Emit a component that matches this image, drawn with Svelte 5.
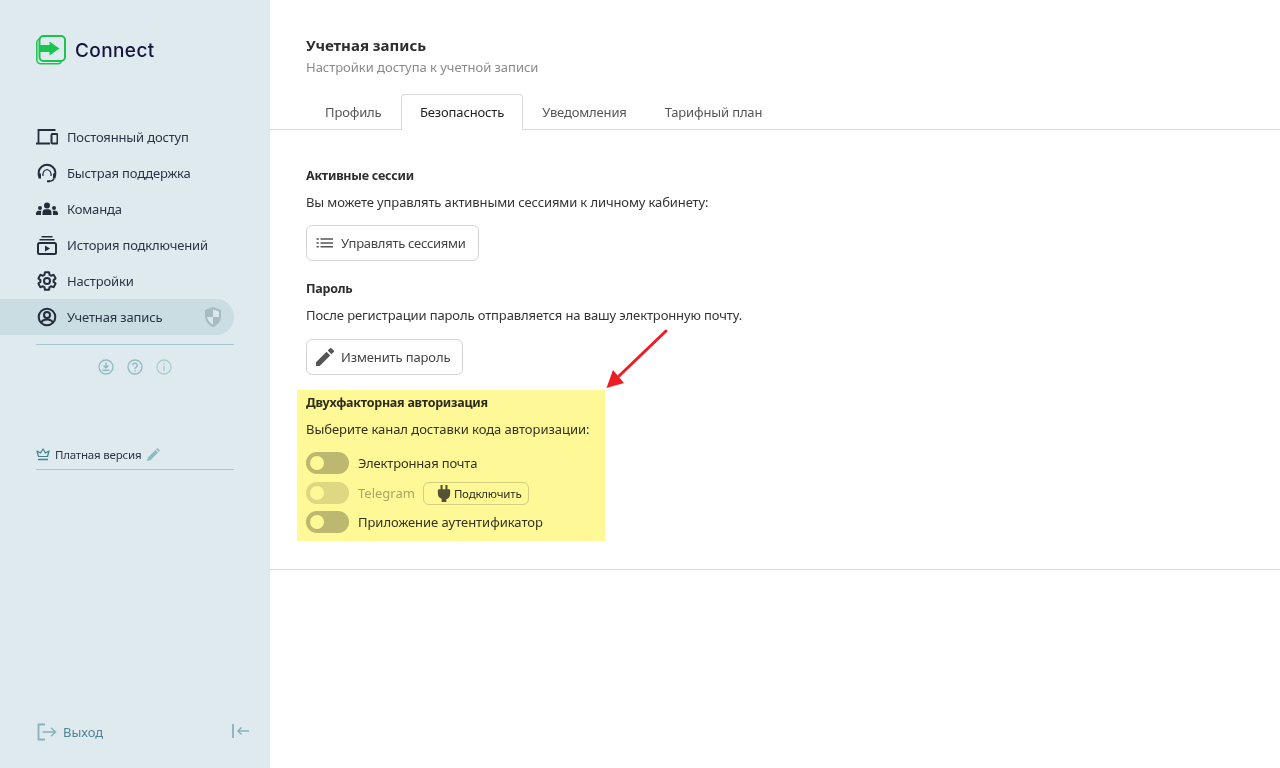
<script>
  const nav = [
    { label: 'Постоянный доступ', icon: 'devices' },
    { label: 'Быстрая поддержка', icon: 'support' },
    { label: 'Команда', icon: 'team' },
    { label: 'История подключений', icon: 'history' },
    { label: 'Настройки', icon: 'gear' },
    { label: 'Учетная запись', icon: 'user', active: true }
  ];
  const tabs = ['Профиль', 'Безопасность', 'Уведомления', 'Тарифный план'];
</script>

<div class="page">
  <aside class="side">
    <div class="logo">
      <svg width="30" height="30" viewBox="0 0 30 30" fill="none">
        <rect x="0.800" y="3.800" width="25" height="25" rx="4" stroke="#1cc44f" stroke-width="1.500"/>
        <rect x="3.500" y="1" width="25.500" height="25" rx="4" fill="#dfeaef" stroke="#1cc44f" stroke-width="2"/>
        <path d="M4 10h9.500V6.500L23.500 13.500l-10 7V17H4z" fill="#1cc44f"/>
      </svg>
      <span>Connect</span>
    </div>

    <nav class="nav">
      {#each nav as item}
        <div class="item" class:active={item.active}>
          <svg class="ico" width="22" height="22" viewBox="0 0 22 22" fill="none" stroke="#252c3b" stroke-width="2">
            {#if item.icon === 'devices'}
              <path d="M2.500 17V4h17" stroke-width="1.800"/>
              <path d="M0 17.500h14" stroke-width="2"/>
              <rect x="15.500" y="8" width="6" height="9.500" rx="1"/>
            {:else if item.icon === 'support'}
              <path d="M3.800 15.500a8.400 8.400 0 1 1 14.400 0" />
              <path d="M7 14c-.5-3.500.5-5.500 4-6.500 3.500 1 4.500 3 4 6.500" stroke-width="1.200"/>
              <path d="M2.500 11.500v5h2.500v-5zM17 11.500v5h2.500v-5z" fill="#252c3b" stroke="none"/>
              <path d="M18 16.500c-.8 2.200-3 2.800-5.500 2.800" stroke-width="1.600"/>
              <path d="M11 19.300h3" stroke-width="2"/>
            {:else if item.icon === 'team'}
              <g fill="#252c3b" stroke="none">
                <circle cx="11" cy="7.500" r="3"/>
                <path d="M6.500 17v-2.500c0-2 1.500-3.200 3-3.200h3c1.500 0 3 1.200 3 3.200V17z"/>
                <circle cx="4" cy="10" r="2"/>
                <path d="M0 17v-1.500c0-1.500 1-2.700 2.500-2.700h2.800c-.3.600-.3 1.500-.3 2V17z"/>
                <circle cx="18" cy="10" r="2"/>
                <path d="M22 17v-1.500c0-1.500-1-2.700-2.500-2.700h-2.800c.3.600.3 1.500.3 2V17z"/>
              </g>
            {:else if item.icon === 'history'}
              <path d="M5.500 2.800h11M3.500 5.800h15" stroke-width="1.500"/>
              <rect x="2" y="9" width="18" height="11" rx="1.500" stroke-width="2"/>
              <path d="M9 11.500l5 3-5 3z" fill="#252c3b" stroke="none"/>
            {:else if item.icon === 'gear'}
              <path transform="scale(.9167)" stroke-width="2.200" stroke-linejoin="round" d="M19.140 12.940c.04-.3.06-.61.06-.94 0-.32-.02-.64-.07-.94l2.030-1.580c.18-.14.23-.41.12-.61l-1.920-3.320c-.12-.22-.37-.29-.59-.22l-2.390.96c-.5-.38-1.030-.7-1.620-.94l-.36-2.540c-.04-.24-.24-.41-.48-.41h-3.840c-.24 0-.43.17-.47.41l-.36 2.540c-.59.24-1.130.57-1.620.94l-2.390-.96c-.22-.08-.47 0-.59.22L2.740 8.870c-.12.21-.08.47.12.61l2.030 1.580c-.05.3-.09.63-.09.94s.02.64.07.94l-2.030 1.580c-.18.14-.23.41-.12.61l1.920 3.320c.12.22.37.29.59.22l2.390-.96c.5.38 1.030.7 1.620.94l.36 2.540c.05.24.24.41.48.41h3.840c.24 0 .44-.17.47-.41l.36-2.540c.59-.24 1.130-.56 1.620-.94l2.390.96c.22.08.47 0 .59-.22l1.920-3.320c.12-.22.07-.47-.12-.61l-2.010-1.580z"/>
              <circle cx="11" cy="11" r="3"/>
            {:else}
              <circle cx="11" cy="11" r="8.300"/>
              <circle cx="11" cy="9" r="3"/>
              <path d="M5 17c1-2.400 3.200-3.500 6-3.500s5 1.100 6 3.500"/>
            {/if}
          </svg>
          <span>{item.label}</span>
          {#if item.active}
            <svg class="shield" width="18" height="20" viewBox="0 0 18 20">
              <path d="M9 0l8 3v6c0 5-3.500 9-8 11-4.500-2-8-6-8-11V3z" fill="#a5bcc2"/>
              <path d="M9 2.200l6 2.200V10H9zM9 10v7.700C6 16 3.700 13.500 3 10z" fill="#dbe6ea"/>
            </svg>
          {/if}
        </div>
      {/each}
    </nav>

    <div class="line"></div>

    <div class="mini">
      <svg width="16" height="16" viewBox="0 0 16 16" fill="none" stroke="#8fbac4" stroke-width="1.300">
        <circle cx="8" cy="8" r="7"/>
        <path d="M8 3.500v5M5.500 6.500L8 9l2.500-2.500" stroke-width="1.500"/>
        <path d="M4.500 11.300h7" stroke-width="1.600"/>
      </svg>
      <svg width="16" height="16" viewBox="0 0 16 16" fill="none" stroke="#8fbac4" stroke-width="1.300">
        <circle cx="8" cy="8" r="7"/>
        <path d="M5.800 6.300a2.200 2.200 0 1 1 3.400 1.900c-.8.500-1.200 1-1.200 1.900" stroke-width="1.500"/>
        <path d="M8 11.300v1.300" stroke-width="1.500"/>
      </svg>
      <svg width="16" height="16" viewBox="0 0 16 16" fill="none" stroke="#aacdd4" stroke-width="1.300">
        <circle cx="8" cy="8" r="7"/>
        <path d="M8 7v5M8 4v1.500" stroke-width="1.500"/>
      </svg>
    </div>

    <div class="plan">
      <svg width="14" height="13" viewBox="0 0 14 13" fill="none" stroke="#47808f" stroke-width="1.200">
        <path d="M2.500 8.500L1 3l3.500 2L7 1l2.500 4L13 3l-1.500 5.500z" stroke-linejoin="round"/>
        <path d="M2 11.500h10" stroke-width="1.500"/>
      </svg>
      <span>Платная версия</span>
      <svg class="pen" width="13" height="13" viewBox="0 0 12 12">
        <path d="M0 12l.8-3.200 7-7 2.400 2.400-7 7zM8.500 1.300L9.800 0 12 2.200l-1.300 1.300z" fill="#8fbac4"/>
      </svg>
    </div>

    <div class="foot">
      <div class="exit">
        <svg width="20" height="18" viewBox="0 0 20 18" fill="none" stroke="#87b2bd" stroke-width="1.500">
          <path d="M8 1.500H1.500v15H8" stroke-width="1.800"/>
          <path d="M5.500 9h13M14 4.800L18.500 9 14 13.200"/>
        </svg>
        <span>Выход</span>
      </div>
      <svg width="17" height="14" viewBox="0 0 17 14" fill="none" stroke="#87b2bd" stroke-width="1.500">
        <path d="M1 0v14" stroke-width="1.800"/>
        <path d="M5.500 7H17M9.500 3.500L6 7l3.500 3.500"/>
      </svg>
    </div>
  </aside>

  <main class="main">
    <header class="head">
      <h1>Учетная запись</h1>
      <p>Настройки доступа к учетной записи</p>
    </header>

    <div class="tabs">
      {#each tabs as t, i}
        <div class="tab" class:on={i === 1}>{t}</div>
      {/each}
    </div>

    <section class="body">
      <h2>Активные сессии</h2>
      <p class="txt">Вы можете управлять активными сессиями к личному кабинету:</p>
      <div class="btn b1">
        <svg width="18" height="18" viewBox="0 0 18 18" fill="#555">
          <path d="M.5 4.300h2.300v1.500H.5zM.5 8.200h2.300v1.500H.5zM.5 12.100h2.300v1.500H.5zM4.500 4.300H17v1.500H4.500zM4.500 8.200H17v1.500H4.500zM4.500 12.100H17v1.500H4.500z"/>
        </svg>
        Управлять сессиями
      </div>

      <h2 class="second">Пароль</h2>
      <p class="txt">После регистрации пароль отправляется на вашу электронную почту.</p>
      <div class="btn b2">
        <svg width="18" height="18" viewBox="0 0 18 18" fill="#555">
          <path d="M0 18v-3.700L10.500 3.800l3.700 3.700L3.700 18zM11.700 2.600L14 .3a1 1 0 0 1 1.400 0l2.300 2.300a1 1 0 0 1 0 1.400l-2.300 2.300z"/>
        </svg>
        Изменить пароль
      </div>

      <div class="twofa">
        <h2>Двухфакторная авторизация</h2>
        <p class="txt">Выберите канал доставки кода авторизации:</p>
        <div class="row r1"><span class="tog"></span>Электронная почта</div>
        <div class="row r2 dim">
          <span class="tog"></span><span class="tg">Telegram</span>
          <span class="conn">
            <svg width="14" height="17" viewBox="0 0 14 18" fill="#555">
              <path d="M3.300 0h2.200v4.500h3V0h2.200v4.500H12c1 0 1.500.5 1.500 1.500v3.500c0 3-1.600 5-4 5.600V18h-5v-3.400c-2.400-.6-4-2.600-4-5.600V6c0-1 .5-1.500 1.500-1.500h1.300z"/>
            </svg>
            Подключить
          </span>
        </div>
        <div class="row r3"><span class="tog"></span>Приложение аутентификатор</div>
      </div>
    </section>
  </main>

  <div class="hl"></div>
  <svg class="arrow" width="70" height="66" viewBox="0 0 70 66">
    <path d="M65 5L18 50" stroke="#ee1c25" stroke-width="3" stroke-linecap="round"/>
    <path d="M5.500 62L12 44l11 13z" fill="#ee1c25"/>
  </svg>
</div>

<style>
  :global(body) {
    margin: 0;
    background: #fff;
  }
  .page {
    position: relative;
    display: flex;
    height: 768px;
    overflow: hidden;
    font-family: "Noto Sans", sans-serif;
    font-size: 13px;
    color: #333;
  }
  .side {
    width: 270px;
    flex: none;
    background: #dfeaef;
    display: flex;
    flex-direction: column;
    box-sizing: border-box;
    padding-top: 35px;
  }
  .logo {
    display: flex;
    align-items: center;
    gap: 9px;
    padding-left: 36px;
    height: 30px;
  }
  .logo span {
    font-family: Inter, sans-serif;
    font-size: 19px;
    font-weight: 500;
    letter-spacing: .4px;
    color: #14143c;
  }
  .nav {
    margin-top: 54px;
  }
  .item {
    display: flex;
    align-items: center;
    height: 36px;
    width: 234px;
    box-sizing: border-box;
    padding-left: 36px;
    color: #2a3444;
    letter-spacing: -.16px;
    border-radius: 0 18px 18px 0;
  }
  .item span {
    margin-left: 9px;
  }
  .ico {
    flex: none;
  }
  .item.active {
    background: #c9dde2;
  }
  .shield {
    margin-left: auto;
    margin-right: 12px;
  }
  .line {
    width: 198px;
    margin: 9px 0 0 36px;
    border-top: 1px solid #a6c8d0;
  }
  .mini {
    width: 198px;
    margin: 14px 0 0 36px;
    display: flex;
    justify-content: center;
    gap: 13px;
  }
  .plan {
    width: 198px;
    margin: 65px 0 0 36px;
    height: 30px;
    box-sizing: border-box;
    border-bottom: 1px solid #a6c8d0;
    display: flex;
    align-items: center;
    gap: 5px;
    font-size: 11.500px;
    letter-spacing: -.2px;
    color: #2a3444;
  }
  .pen {
    margin-left: 1px;
  }
  .foot {
    margin-top: auto;
    height: 48px;
    box-sizing: border-box;
    padding: 0 21px 0 37px;
    display: flex;
    align-items: flex-start;
    justify-content: space-between;
  }
  .foot > svg {
    margin-top: 4px;
  }
  .exit {
    display: flex;
    align-items: center;
    gap: 6px;
    color: #4f8596;
    height: 24px;
  }
  .main {
    flex: 1;
    min-width: 0;
  }
  .head {
    padding: 35px 36px 0;
  }
  h1 {
    margin: 0;
    font-size: 15px;
    line-height: 20px;
    font-weight: 700;
    color: #2d2d2d;
  }
  .head p {
    margin: 3px 0 0;
    font-size: 13px;
    line-height: 18px;
    letter-spacing: -.03px;
    color: #8a8a8a;
  }
  .tabs {
    display: flex;
    align-items: flex-end;
    margin-top: 17px;
    padding-left: 36px;
    height: 36px;
    border-bottom: 1px solid #d9d9d9;
  }
  .tab {
    padding: 0 18px;
    line-height: 34px;
    height: 35px;
    box-sizing: border-box;
    color: #555;
    letter-spacing: -.15px;
    border: 1px solid transparent;
    border-bottom: 0;
    border-radius: 4px 4px 0 0;
  }
  .tab:first-child {
    padding-right: 18.500px;
  }
  .tab.on {
    height: 36px;
    margin-bottom: -1px;
    background: #fff;
    border-color: #d9d9d9;
    color: #222;
  }
  .body {
    padding: 37px 36px 0;
    height: 440px;
    box-sizing: border-box;
    border-bottom: 1px solid #d9d9d9;
  }
  h2 {
    margin: 0;
    font-size: 12.500px;
    line-height: 18px;
    font-weight: 700;
    letter-spacing: -.24px;
    color: #2d2d2d;
  }
  .second {
    margin-top: 19px;
  }
  .txt {
    margin: 8px 0 0;
    line-height: 18px;
    letter-spacing: -.115px;
    color: #333;
  }
  .twofa .txt {
    letter-spacing: -.03px;
  }
  .btn {
    display: inline-flex;
    align-items: center;
    gap: 7px;
    height: 36px;
    box-sizing: border-box;
    margin-top: 14px;
    padding: 0 12px 0 9px;
    border: 1px solid #d4d4d4;
    border-radius: 6px;
    color: #444;
  }
  .b1 {
    letter-spacing: -.28px;
  }
  .b2 {
    margin-top: 15px;
    letter-spacing: -.13px;
  }
  .twofa {
    margin-top: 19px;
  }
  .row {
    display: flex;
    align-items: center;
    height: 22px;
    color: #333;
  }
  .r1 {
    margin-top: 14px;
    letter-spacing: -.17px;
  }
  .r2 {
    margin-top: 8px;
  }
  .r3 {
    margin-top: 7px;
    letter-spacing: -.04px;
  }
  .tog {
    position: relative;
    width: 43px;
    height: 22px;
    border-radius: 11px;
    background: #bdbdbd;
    margin-right: 9px;
    flex: none;
  }
  .tog::after {
    content: "";
    position: absolute;
    left: 4px;
    top: 4px;
    width: 14px;
    height: 14px;
    border-radius: 50%;
    background: #fff;
  }
  .dim .tog {
    background: #dedede;
  }
  .tg {
    color: #aaa;
  }
  .conn {
    display: inline-flex;
    align-items: center;
    gap: 3px;
    height: 23px;
    box-sizing: border-box;
    margin-left: 8px;
    padding: 0 7px 0 13px;
    border: 1px solid #d4d4d4;
    border-radius: 6px;
    font-size: 11.500px;
    letter-spacing: -.2px;
    color: #333;
  }
  .hl {
    position: absolute;
    left: 297px;
    top: 390px;
    width: 308px;
    height: 151px;
    background: #fff897;
    mix-blend-mode: multiply;
    pointer-events: none;
  }
  .arrow {
    position: absolute;
    left: 601px;
    top: 326px;
  }
</style>
